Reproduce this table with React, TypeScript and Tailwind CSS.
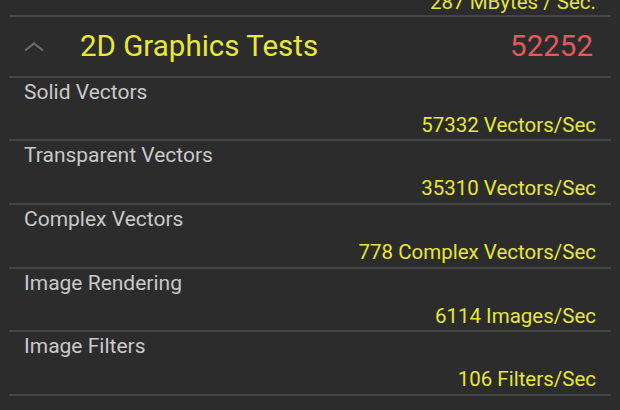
import React from "react";

const rows = [
  { label: "Solid Vectors", value: "57332 Vectors/Sec", h: "h-[61px]" },
  { label: "Transparent Vectors", value: "35310 Vectors/Sec", h: "h-[62px]" },
  { label: "Complex Vectors", value: "778 Complex Vectors/Sec", h: "h-[62px]" },
  { label: "Image Rendering", value: "6114 Images/Sec", h: "h-[61px]" },
  { label: "Image Filters", value: "106 Filters/Sec", h: "h-[62px]" },
];

function Divider() {
  return <div className="mx-[9px] h-[2px] bg-[#454545]" />;
}

export default function App() {
  return (
    <div
      className="w-[620px] h-[410px] overflow-hidden bg-[#2c2c2c]"
      style={{ fontFamily: "Roboto, 'Noto Sans', sans-serif" }}
    >
      <div className="h-[15px] flex justify-end items-end pr-[24px] overflow-hidden">
        <span className="text-[20.5px] leading-[20px] text-[#e4e43a] mb-[3px]">287 MBytes / Sec.</span>
      </div>
      <Divider />
      <div className="h-[59px] flex items-center pl-[24px] pr-[27px]">
        <svg width="20" height="10" viewBox="0 0 20 10" className="shrink-0">
          <polyline points="1,8.5 10,1.5 19,8.5" fill="none" stroke="#6a6a6a" strokeWidth="2.2" />
        </svg>
        <span className="ml-[36px] text-[29.5px] leading-none text-[#e8e83c]">2D Graphics Tests</span>
        <span className="ml-auto text-[29.5px] leading-none text-[#e05a5c]">52252</span>
      </div>
      <Divider />
      {rows.map((r) => (
        <div key={r.label}>
          <div className={`${r.h} flex flex-col pl-[24px] pr-[24px]`}>
            <div className="text-[21px] leading-[24px] text-[#c9c9c9] mt-[2px]">{r.label}</div>
            <div className="text-[20.5px] leading-[24px] text-[#e6e63a] text-right mt-[9px]">{r.value}</div>
          </div>
          <Divider />
        </div>
      ))}
    </div>
  );
}
